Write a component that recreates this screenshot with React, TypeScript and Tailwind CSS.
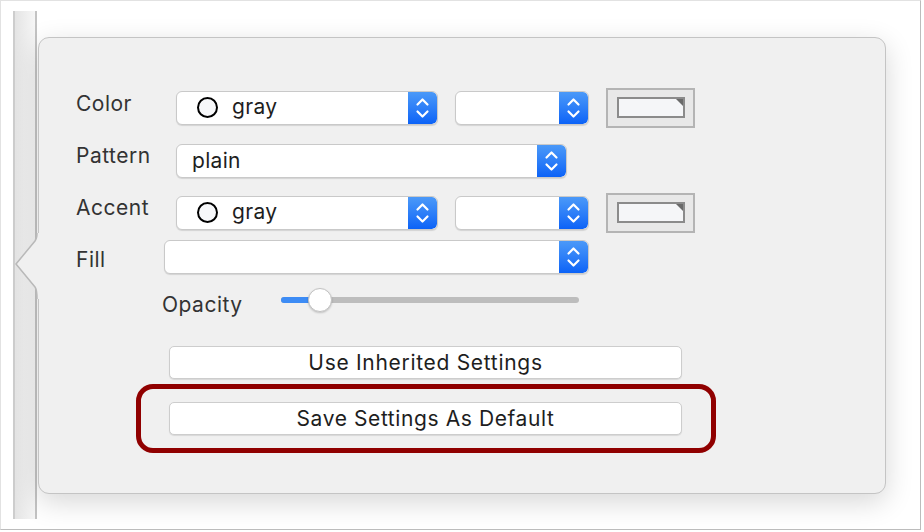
import React from "react";

const font = { fontFamily: "Inter, 'Liberation Sans', sans-serif" };

function Stepper() {
  return (
    <div className="w-[29px] h-full shrink-0 bg-gradient-to-b from-[#4b99f8] to-[#0b62f7] flex items-center justify-center rounded-r-[5px]">
      <svg width="29" height="34" viewBox="0 0 29 34" fill="none">
        <polyline points="9.5,13.5 14.5,8.5 19.5,13.5" stroke="white" strokeWidth="2.2" strokeLinecap="round" strokeLinejoin="round" />
        <polyline points="9.5,20.5 14.5,25.5 19.5,20.5" stroke="white" strokeWidth="2.2" strokeLinecap="round" strokeLinejoin="round" />
      </svg>
    </div>
  );
}

function Popup({ w, h = 34, children }: { w: string; h?: number; children?: React.ReactNode }) {
  return (
    <div
      className={`${w} flex bg-white border border-[#c9c9c9] rounded-[6px] shadow-[0_1px_1px_rgba(0,0,0,0.12)] overflow-hidden`}
      style={{ height: h }}
    >
      <div className="flex-1 flex items-center text-[21px] text-[#1e1e1e] tracking-[0.3px]">{children}</div>
      <Stepper />
    </div>
  );
}

function ColorWell() {
  return (
    <div className="w-[89px] h-[40px] border-2 border-[#b4b4b4] bg-[#e8e8e8] flex items-center justify-center shrink-0">
      <div className="relative w-[68px] h-[21px] border-2 border-[#8b8b8b] bg-[#f5f6f8]">
        <svg className="absolute right-0 top-0" width="7" height="7" viewBox="0 0 7 7">
          <polygon points="0,0 7,0 7,7" fill="#6a6a6a" />
        </svg>
      </div>
    </div>
  );
}

function GrayItem() {
  return (
    <>
      <div className="ml-[20px] w-[21px] h-[21px] rounded-full border-2 border-black bg-[#f7f8fa] shrink-0" />
      <span className="ml-[14px] mb-[1px]">gray</span>
    </>
  );
}

function Label({ children, cls }: { children: React.ReactNode; cls: string }) {
  return <div className={`${cls} text-[21px] text-[#333333] tracking-[0.5px] shrink-0`}>{children}</div>;
}

export default function App() {
  return (
    <div className="w-[924px] h-[532px] bg-white" style={font}>
      <div className="w-[921px] h-[530px] bg-white border-l border-t border-[#e2e2e2] border-r border-b border-r-[#bcbcbc] border-b-[#bcbcbc] flex items-start overflow-hidden">
        {/* sidebar strip */}
        <div className="ml-[12px] mt-[10px] w-[24px] h-[508px] border-l-2 border-r-2 border-l-[#cdcdcd] border-r-[#c3c3c3] bg-gradient-to-r from-[#e4e4e4] to-[#f6f6f6] shrink-0" />
        {/* popover */}
        <div className="relative ml-[1px] mt-[36px] w-[848px] h-[457px] bg-[#f0f0f0] border border-[#c4c4c4] rounded-[11px] shadow-[0_8px_28px_rgba(0,0,0,0.16)] shrink-0 pl-[37px] flex flex-col">
          {/* arrow */}
          <svg className="absolute left-[-25px] top-[195px]" width="28" height="66" viewBox="0 0 28 66">
            <path d="M26,0 L23,0 C23,4 22.5,6 21,8 L2,31 L21,54 C22.5,56 23,58 23,66 L28,66 L28,0 Z" fill="#f0f0f0" />
            <path d="M23,0 C23,4 22.5,6 21,8 L2,31 L21,54 C22.5,56 23,58 23,66" fill="none" stroke="#b9b9b9" strokeWidth="1.5" />
          </svg>

          {/* Color row */}
          <div className="mt-[50px] h-[39px] flex items-center">
            <Label cls="w-[100px] mb-[8px]">Color</Label>
            <Popup w="w-[262px]"><GrayItem /></Popup>
            <div className="ml-[17px]"><Popup w="w-[134px]" /></div>
            <div className="ml-[17px]"><ColorWell /></div>
          </div>

          {/* Pattern row */}
          <div className="mt-[17px] h-[34px] flex items-center">
            <Label cls="w-[100px] mb-[10px]">Pattern</Label>
            <Popup w="w-[391px]"><span className="ml-[15px] mb-[1px]">plain</span></Popup>
          </div>

          {/* Accent row */}
          <div className="mt-[15px] h-[39px] flex items-center">
            <Label cls="w-[100px] mb-[9px]">Accent</Label>
            <Popup w="w-[262px]"><GrayItem /></Popup>
            <div className="ml-[17px]"><Popup w="w-[134px]" /></div>
            <div className="ml-[17px]"><ColorWell /></div>
          </div>

          {/* Fill row */}
          <div className="mt-[8px] h-[34px] flex items-center">
            <Label cls="w-[88px] mt-[6px]">Fill</Label>
            <Popup w="w-[425px]" h={34} />
          </div>

          {/* Opacity row */}
          <div className="mt-[13px] h-[26px] flex items-center">
            <Label cls="ml-[86px] w-[119px] mt-[9px]">Opacity</Label>
            <div className="relative w-[298px] h-[26px] flex items-center">
              <div className="w-full h-[6px] rounded-full bg-[#bdbdbd] flex">
                <div className="w-[40px] h-full rounded-l-full bg-[#3d8cf5]" />
              </div>
              <div className="absolute left-[27px] top-[1px] w-[24px] h-[24px] rounded-full bg-white border border-[#c2c2c2] shadow-[0_1px_2px_rgba(0,0,0,0.2)]" />
            </div>
          </div>

          {/* Use Inherited */}
          <div className="mt-[33px] ml-[93px] w-[513px] h-[33px] bg-white border border-[#cdcdcd] rounded-[5px] shadow-[0_1px_1px_rgba(0,0,0,0.1)] flex items-center justify-center text-[21px] text-[#1e1e1e] tracking-[0.7px]">
            Use Inherited Settings
          </div>

          {/* Red highlight */}
          <div className="mt-[5px] ml-[60px] w-[580px] h-[69px] border-[5px] border-[#900000] rounded-[17px] pl-[28px] pt-[13px]">
            <div className="w-[513px] h-[33px] bg-white border border-[#cdcdcd] rounded-[5px] shadow-[0_1px_1px_rgba(0,0,0,0.1)] flex items-center justify-center text-[21px] text-[#1e1e1e] tracking-[0.6px]">
              Save Settings As Default
            </div>
          </div>
        </div>
      </div>
    </div>
  );
}
